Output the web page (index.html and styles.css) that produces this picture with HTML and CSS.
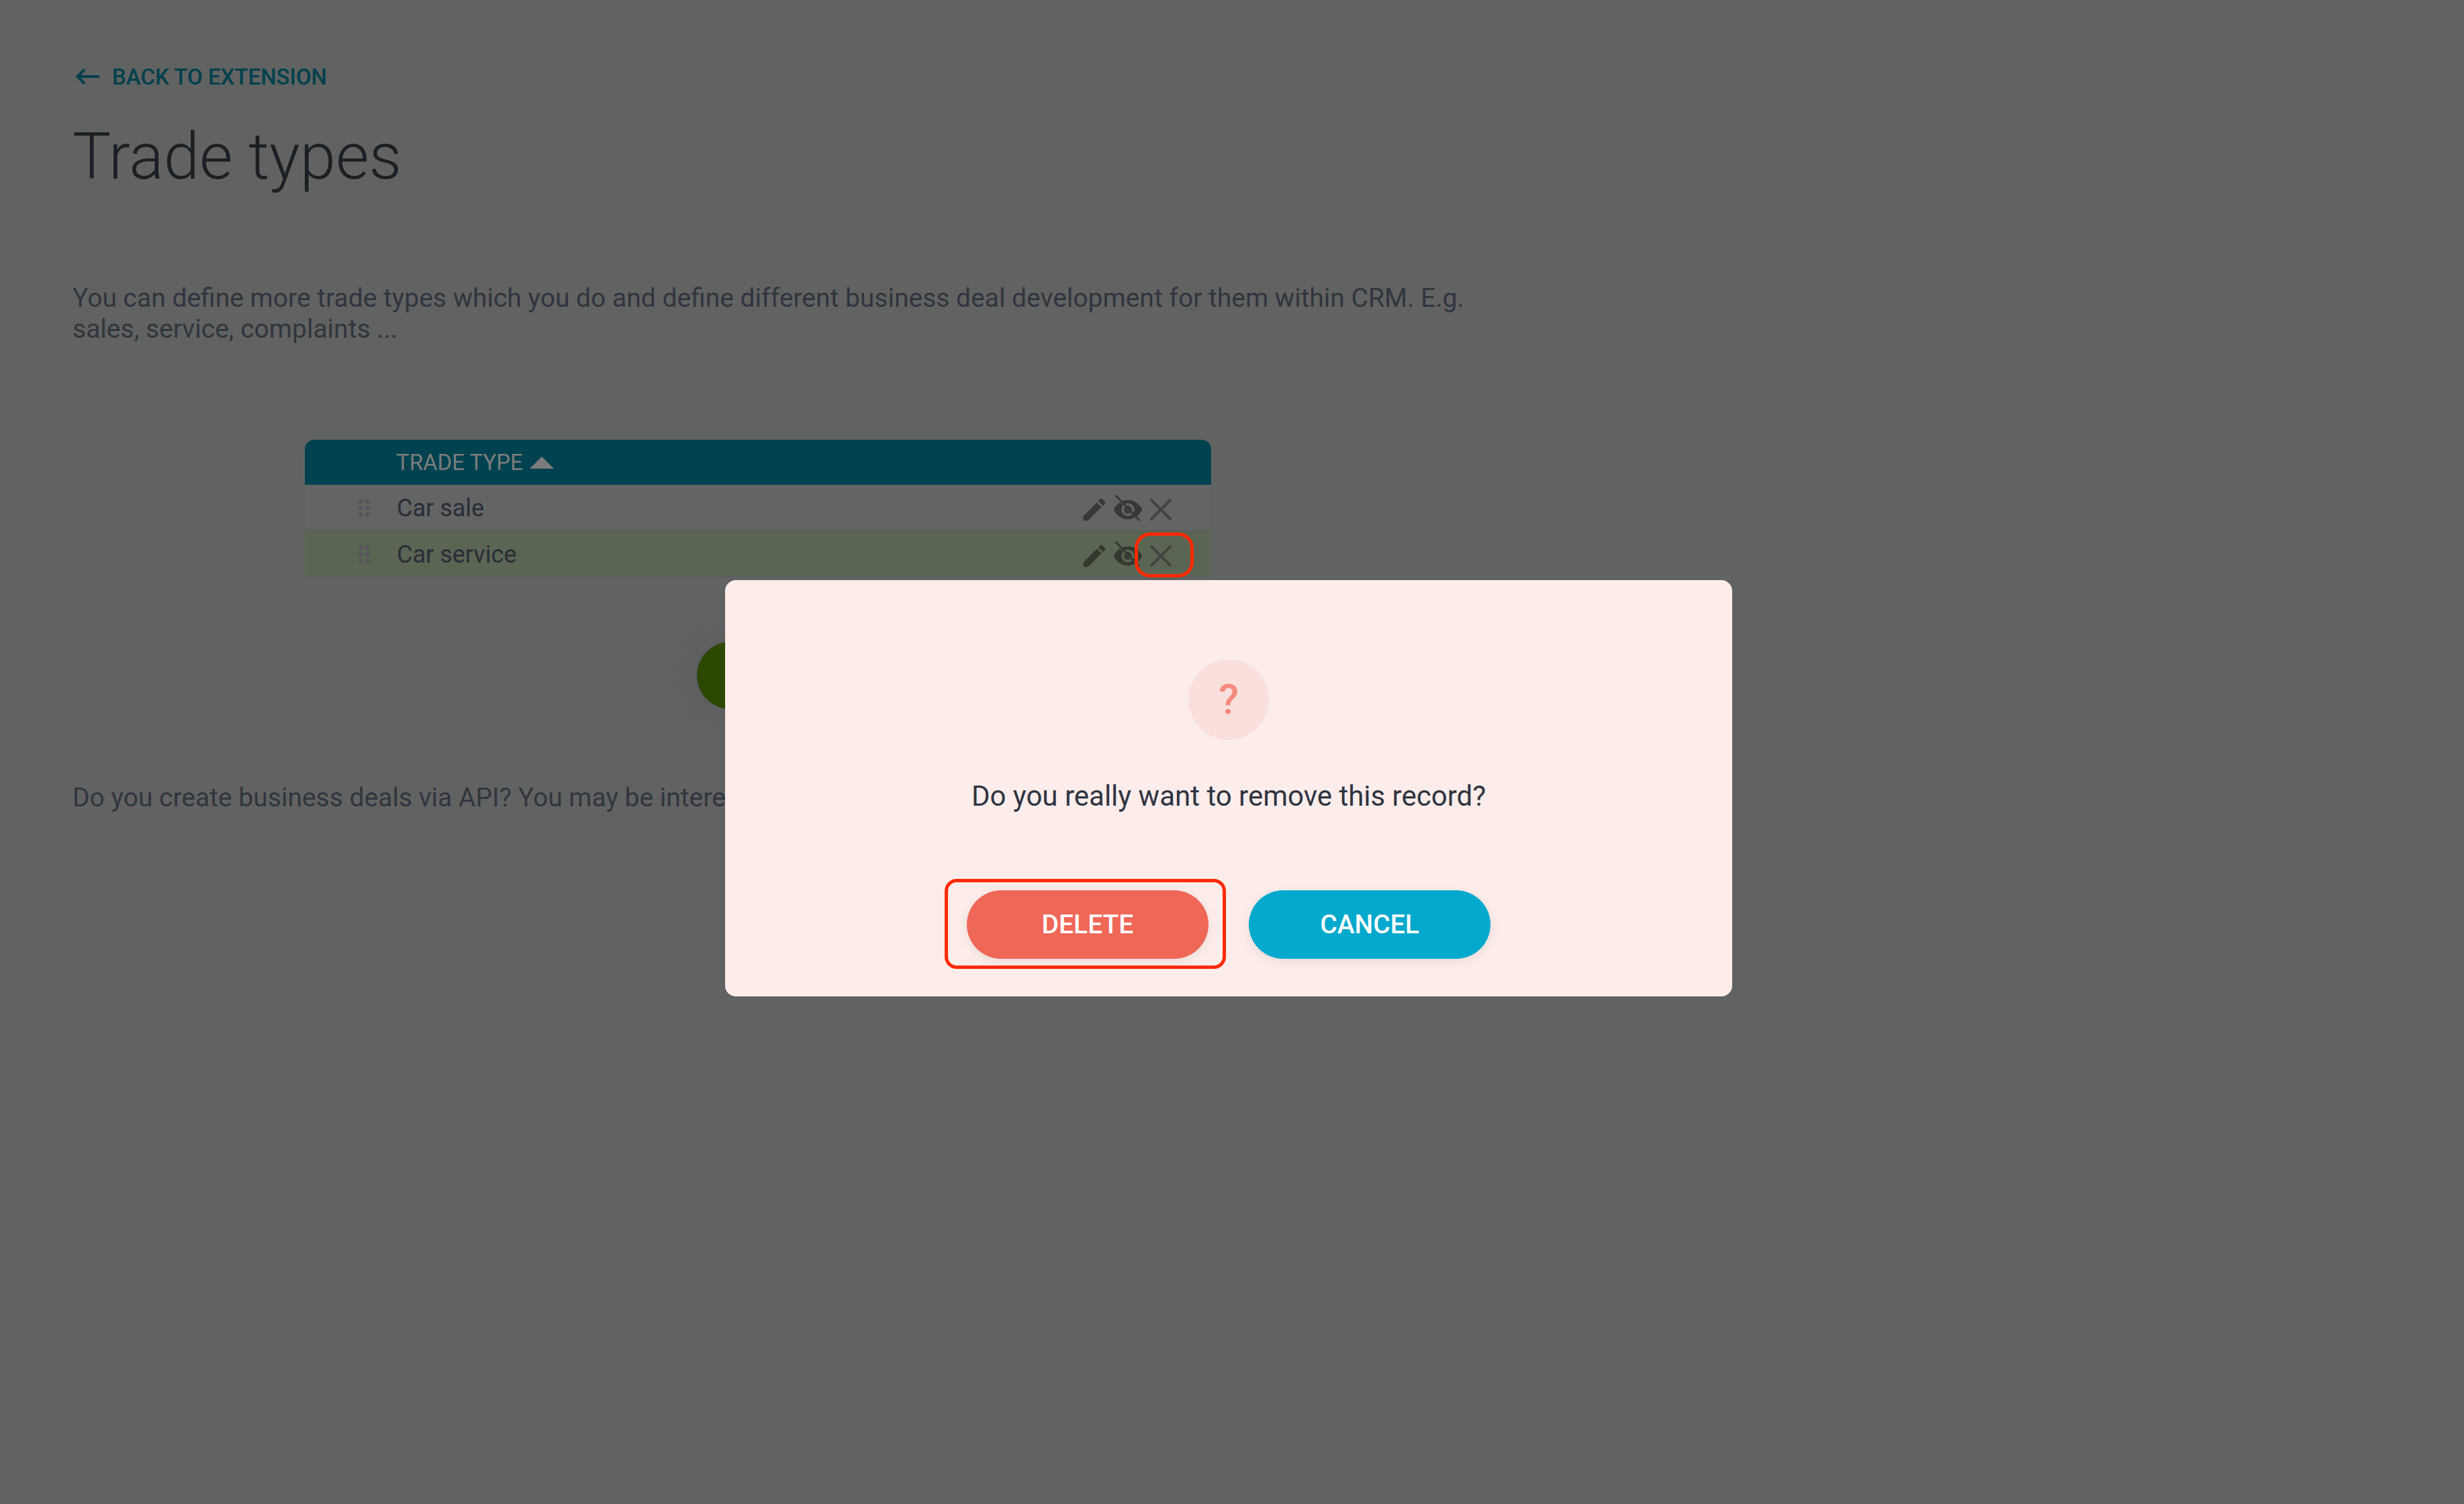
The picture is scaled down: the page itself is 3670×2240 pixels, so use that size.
FILE: index.html
```html
<!DOCTYPE html>
<html lang="en">
<head>
    <meta charset="UTF-8">
    <meta name="viewport" content="width=device-width, initial-scale=1.0">
    <title>Trade types</title>
    <link rel="stylesheet" href="styles.css">
</head>
<body>
    <div class="page">
        <a class="back-link" href="#">
            <svg class="back-arrow" width="36" height="24" viewBox="0 0 36 24"><path d="M35 12H3M13 1.500 2.500 12 13 22.500" fill="none" stroke="currentColor" stroke-width="4"/></svg>
            BACK TO EXTENSION
        </a>
        <h1>Trade types</h1>
        <p class="intro">You can define more trade types which you do and define different business deal development for them within CRM. E.g. sales, service, complaints ...</p>

        <div class="trade-table">
            <div class="table-head">
                <span>TRADE TYPE</span>
                <i class="sort-up"></i>
            </div>
            <div class="table-row">
                <div class="drag"><i></i><i></i><i></i><i></i><i></i><i></i></div>
                <div class="row-name">Car sale</div>
                <div class="row-actions">
                    <svg class="ico-edit" viewBox="0 0 24 24"><path d="M3 17.250V21h3.750L17.810 9.940l-3.750-3.750L3 17.250zM20.710 7.040c.39-.39.39-1.020 0-1.410l-2.340-2.340c-.39-.39-1.020-.39-1.410 0l-1.830 1.830 3.750 3.750 1.830-1.830z"/></svg>
                    <svg class="ico-eye" viewBox="0 0 24 24"><path d="M12 4.500C7 4.500 2.730 7.610 1 12c1.730 4.390 6 7.500 11 7.500s9.270-3.110 11-7.500c-1.730-4.390-6-7.500-11-7.500zM12 17c-2.760 0-5-2.240-5-5s2.240-5 5-5 5 2.240 5 5-2.240 5-5 5zm0-8c-1.660 0-3 1.340-3 3s1.340 3 3 3 3-1.340 3-3-1.340-3-3-3z"/><path class="slash-gap" d="M3 2.500 21.500 21"/><path class="slash" d="M2.500 1 21 20.500"/></svg>
                    <svg class="ico-close" viewBox="0 0 32 32"><path d="M2 2 30 30M30 2 2 30"/></svg>
                </div>
            </div>
            <div class="table-row is-active">
                <div class="drag"><i></i><i></i><i></i><i></i><i></i><i></i></div>
                <div class="row-name">Car service</div>
                <div class="row-actions">
                    <svg class="ico-edit" viewBox="0 0 24 24"><path d="M3 17.250V21h3.750L17.810 9.940l-3.750-3.750L3 17.250zM20.710 7.040c.39-.39.39-1.020 0-1.410l-2.340-2.340c-.39-.39-1.020-.39-1.410 0l-1.830 1.830 3.750 3.750 1.830-1.830z"/></svg>
                    <svg class="ico-eye" viewBox="0 0 24 24"><path d="M12 4.500C7 4.500 2.730 7.610 1 12c1.730 4.390 6 7.500 11 7.500s9.270-3.110 11-7.500c-1.730-4.390-6-7.500-11-7.500zM12 17c-2.760 0-5-2.240-5-5s2.240-5 5-5 5 2.240 5 5-2.240 5-5 5zm0-8c-1.660 0-3 1.340-3 3s1.340 3 3 3 3-1.340 3-3-1.340-3-3-3z"/><path class="slash-gap" d="M3 2.500 21.500 21"/><path class="slash" d="M2.500 1 21 20.500"/></svg>
                    <svg class="ico-close" viewBox="0 0 32 32"><path d="M2 2 30 30M30 2 2 30"/></svg>
                    <span class="mark-close"></span>
                </div>
            </div>
        </div>

        <div class="add-row"><span class="add-btn"></span></div>

        <p class="api-note">Do you create business deals via API? You may be interested in this.</p>
    </div>

    <div class="dialog-layer">
        <div class="dialog">
            <div class="dialog-icon">?</div>
            <p class="dialog-text">Do you really want to remove this record?</p>
            <div class="dialog-buttons">
                <button class="btn btn-delete">DELETE<span class="mark-delete"></span></button>
                <button class="btn btn-cancel">CANCEL</button>
            </div>
        </div>
    </div>
</body>
</html>
```

FILE: styles.css
```css
* {
    box-sizing: border-box;
}
html, body {
    margin: 0;
    height: 100%;
}
body {
    background: #616362;
    font-family: Roboto, "Liberation Sans", sans-serif;
    color: #31353f;
    overflow: hidden;
    position: relative;
}
.page {
    padding: 94px 108px 0;
}
.back-link {
    display: flex;
    align-items: center;
    gap: 18px;
    height: 40px;
    padding-left: 5px;
    color: #00404c;
    font-size: 33px;
    font-weight: 500;
    text-decoration: none;
}
.back-arrow {
    flex: none;
}
h1 {
    margin: 43px 0 0;
    font-size: 96px;
    line-height: 112px;
    font-weight: 300;
    color: #1c1f24;
}
.intro {
    margin: 132px 0 0;
    width: 2100px;
    font-size: 39px;
    line-height: 46px;
}

.trade-table {
    margin: 142px 0 0 346px;
    width: 1350px;
}
.table-head {
    display: flex;
    align-items: center;
    height: 67px;
    padding-left: 136px;
    background: #00424f;
    border-radius: 14px 14px 0 0;
    color: #7b7d7d;
    font-size: 33px;
}
.sort-up {
    margin-left: 10px;
    border-left: 18px solid transparent;
    border-right: 18px solid transparent;
    border-bottom: 18px solid #7c7c7c;
}
.table-row {
    display: flex;
    align-items: center;
    height: 69px;
    padding-top: 2px;
    background: #636565;
    border-bottom: 2px solid #5c5e60;
}
.table-row.is-active {
    background: #5a6553;
}
.drag {
    display: grid;
    grid-template-columns: 7px 7px;
    gap: 3px;
    margin-left: 80px;
}
.drag i {
    width: 7px;
    height: 7px;
    border-radius: 50%;
    background: #55575c;
}
.row-name {
    flex: 1;
    margin-left: 40px;
    font-size: 36px;
    color: #2a2d38;
}
.row-actions {
    display: flex;
    align-items: center;
    position: relative;
    margin-top: 4px;
    margin-right: 59px;
    fill: #36383c;
}
.ico-edit {
    width: 44px;
    height: 44px;
}
.ico-eye {
    width: 46px;
    height: 46px;
    margin-left: 5px;
    overflow: visible;
}
.slash {
    fill: none;
    stroke: #36383c;
    stroke-width: 1.600;
}
.slash-gap {
    fill: none;
    stroke: #636565;
    stroke-width: 1.300;
}
.is-active .slash-gap {
    stroke: #5a6553;
}
.is-active .row-actions {
    fill: #33392f;
}
.is-active .slash {
    stroke: #33392f;
}
.ico-close {
    width: 32px;
    height: 32px;
    margin-left: 10px;
    fill: none;
    stroke: #424442;
    stroke-width: 4;
    stroke-linecap: round;
}

/* red annotation frames drawn over the shot */
.mark-close {
    position: absolute;
    right: -33px;
    top: -12px;
    width: 88px;
    height: 67px;
    border: 5px solid #ff2a00;
    border-radius: 23px;
}
.mark-delete {
    position: absolute;
    left: -33px;
    top: -17px;
    width: 419px;
    height: 134px;
    border: 5px solid #ff2a00;
    border-radius: 18px;
}

.add-row {
    margin: 96px 0 0 930px;
}
.add-btn {
    display: block;
    width: 100px;
    height: 100px;
    border-radius: 50%;
    background: #2c4700;
    box-shadow: 0 0 24px rgba(80, 78, 98, .5);
}
.api-note {
    margin: 109px 0 0;
    font-size: 39px;
    line-height: 47px;
}

.dialog-layer {
    position: absolute;
    top: 864px;
    left: 0;
    right: 10px;
    display: flex;
    justify-content: center;
}
.dialog {
    width: 1500px;
    height: 620px;
    padding-top: 118px;
    background: #fcedea;
    border-radius: 16px;
    text-align: center;
}
.dialog-icon {
    width: 120px;
    height: 120px;
    margin: 0 auto;
    border-radius: 50%;
    background: #f9e0dc;
    color: #f48a7e;
    font-size: 62px;
    line-height: 120px;
    font-weight: 500;
}
.dialog-text {
    margin: 59px 0 0;
    font-size: 42px;
    line-height: 50px;
    color: #2f3442;
}
.dialog-buttons {
    display: flex;
    justify-content: center;
    gap: 60px;
    margin-top: 115px;
}
.btn {
    position: relative;
    width: 360px;
    height: 102px;
    border: 0;
    border-radius: 51px;
    color: #fff;
    font-family: inherit;
    font-size: 39px;
    font-weight: 500;
    box-shadow: 0 4px 16px rgba(0, 0, 0, .08);
}
.btn-delete {
    background: #ef6757;
}
.btn-cancel {
    background: #03a9cd;
}
```
